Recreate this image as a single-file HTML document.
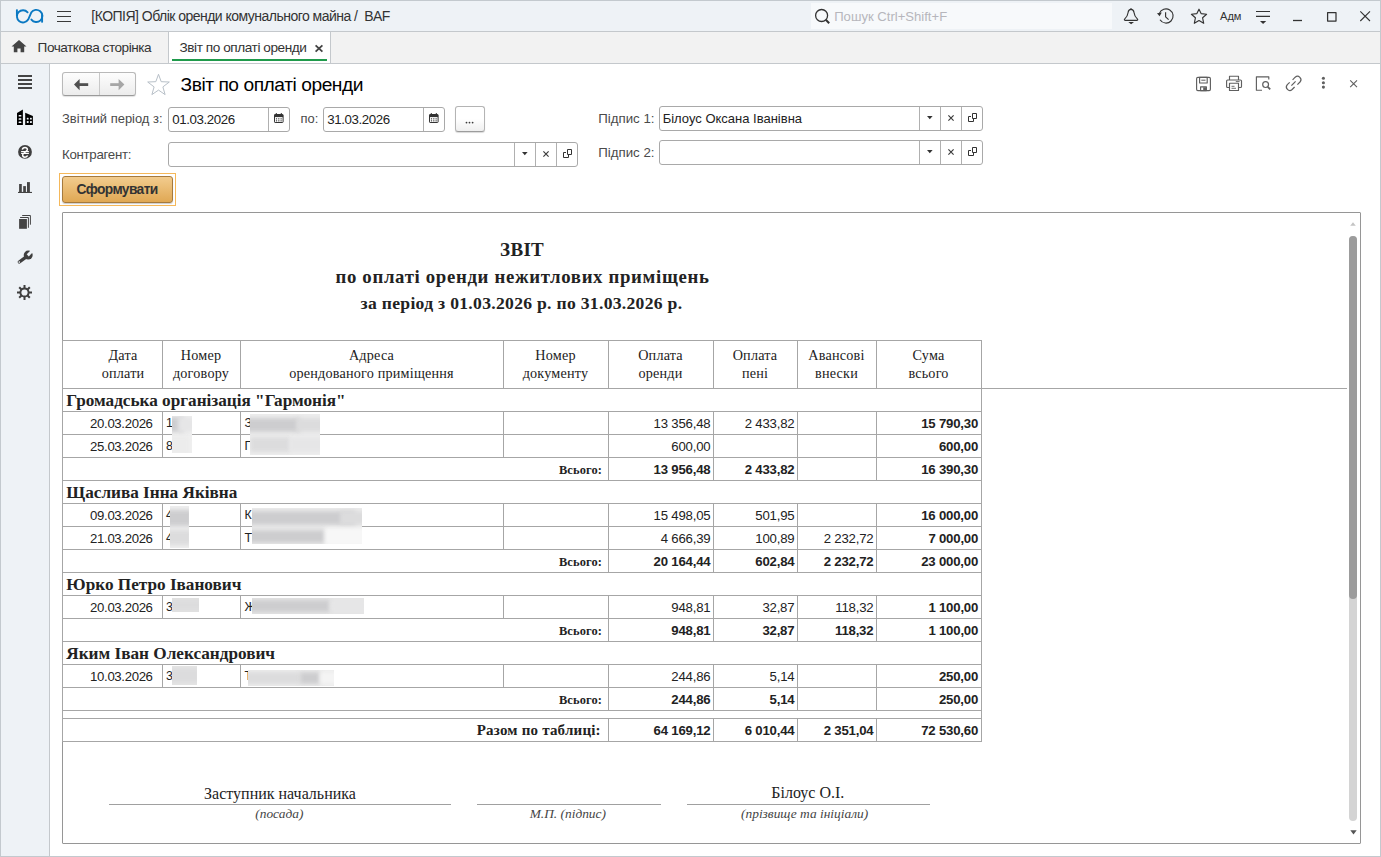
<!DOCTYPE html>
<html><head><meta charset="utf-8"><title>Звіт по оплаті оренди</title>
<style>
html,body{margin:0;padding:0;}
body{width:1381px;height:857px;overflow:hidden;position:relative;background:#fff;font-family:"Liberation Sans",sans-serif;}
.t{position:absolute;white-space:nowrap;line-height:1;}
.l{position:absolute;box-sizing:border-box;}
svg{position:absolute;overflow:visible;}
</style></head><body>

<div class="l" style="left:0px;top:0px;width:1381px;height:32px;background:#eef2f6;"></div>
<div class="l" style="left:0px;top:32px;width:1381px;height:32px;background:#f2f2f2;"></div>
<div class="l" style="left:0px;top:64px;width:50px;height:793px;background:#eef2f6;"></div>
<div class="l" style="left:0px;top:0px;width:1381px;height:1px;background:#c3c9ce"></div>
<div class="l" style="left:0px;top:0px;width:1px;height:857px;background:#c3c9ce"></div>
<div class="l" style="left:1380px;top:0px;width:1px;height:857px;background:#c3c9ce"></div>
<div class="l" style="left:0px;top:856px;width:1381px;height:1px;background:#c3c9ce"></div>
<div class="l" style="left:1px;top:31px;width:1379px;height:1px;background:#c4c8cc"></div>
<div class="l" style="left:1px;top:63px;width:1379px;height:1px;background:#c4c8cc"></div>
<div class="l" style="left:49px;top:64px;width:1px;height:792px;background:#c4c8cc"></div>
<svg style="left:0px;top:0px" width="50" height="32" viewBox="0 0 50 32">
<g fill="none" stroke="#0a78c2" stroke-width="1.9" stroke-linecap="round">
<path d="M27.6 12.3 A6.1 6.1 0 1 0 28.2 19.6 L31.2 12.6 A6.1 6.1 0 1 1 31.4 19.6"/>
<path d="M16.9 9.4 L16.9 16" stroke-linecap="butt"/>
<path d="M42.1 14.5 L42.1 22.6" stroke-linecap="butt"/>
</g>
</svg>
<div class="l" style="left:57px;top:10.5px;width:14px;height:1.5px;background:#3a3a3a;"></div>
<div class="l" style="left:57px;top:15.5px;width:14px;height:1.5px;background:#3a3a3a;"></div>
<div class="l" style="left:57px;top:20.5px;width:14px;height:1.5px;background:#3a3a3a;"></div>
<div class="t" style="left:91.3px;top:9.35px;font-size:14.0px;font-family:'Liberation Sans', sans-serif;font-weight:400;color:#333;font-style:normal;letter-spacing:-0.52px;">[КОПІЯ] Облік оренди комунального майна /&nbsp; BAF</div>
<div class="l" style="left:811px;top:3px;width:301px;height:26px;background:#f7f9fb;"></div>
<svg style="left:814px;top:8px" width="17" height="17" viewBox="0 0 17 17">
<circle cx="7.6" cy="7.5" r="6" fill="none" stroke="#333" stroke-width="1.3"/>
<path d="M11.8 11.8 L15.2 15.2" stroke="#333" stroke-width="2"/>
</svg>
<div class="t" style="left:834.2px;top:9.91px;font-size:13.1px;font-family:'Liberation Sans', sans-serif;font-weight:400;color:#b6b6bc;font-style:normal;">Пошук Ctrl+Shift+F</div>
<svg style="left:0px;top:0px" width="1381" height="32" viewBox="0 0 1381 32">
<g fill="none" stroke="#333" stroke-width="1.15" stroke-linejoin="round">
<path d="M1131 9.4 C1129 9.4 1128.3 10.6 1128.1 12.5 C1127.8 15.6 1127.5 16.5 1124.6 19.2 C1124.2 19.7 1124.3 20.3 1125 20.3 L1137.1 20.3 C1137.8 20.3 1137.9 19.7 1137.5 19.2 C1134.6 16.5 1134.3 15.6 1134 12.5 C1133.8 10.6 1133.1 9.4 1131 9.4 Z"/>
<path d="M1160 19.8 A7.1 7.1 0 1 0 1159.3 13.6"/>
<path d="M1165.6 12.3 L1165.6 16.8 L1168.6 19.6"/>
<path d="M1199 9.2 L1201.1 13.6 L1206.6 14.3 L1202.6 17.8 L1203.7 23.3 L1199 20.6 L1194.3 23.3 L1195.4 17.8 L1191.4 14.3 L1196.9 13.6 Z"/>
<path d="M1256 11.5 H1270 M1256 16.4 H1270"/>
<path d="M1293 20.5 H1302" stroke-width="1.3"/>
<rect x="1327.6" y="12.6" width="8.4" height="8.4" stroke-width="1.25"/>
<path d="M1360.3 11.3 L1370 21 M1370 11.3 L1360.3 21" stroke-width="1.1"/>
</g>
<g fill="#333">
<circle cx="1131" cy="9.2" r="0.9"/>
<path d="M1128.3 22.1 L1134 22.1 L1131.1 24.2 Z"/>
<path d="M1157 13.2 L1161.8 12.6 L1159.6 16.3 Z"/>
<path d="M1260 21 L1266.2 21 L1263.1 24 Z"/>
</g>
</svg>
<div class="t" style="left:1220px;top:10.60px;font-size:11.1px;font-family:'Liberation Sans', sans-serif;font-weight:400;color:#333;font-style:normal;">Адм</div>
<svg style="left:10.6px;top:40px" width="16" height="13" viewBox="0 0 16 13">
<path d="M8 0 L15.5 6.6 L13.2 6.6 L13.2 12.2 L9.6 12.2 L9.6 8.6 L6.4 8.6 L6.4 12.2 L2.8 12.2 L2.8 6.6 L0.5 6.6 Z" fill="#444"/>
</svg>
<div class="t" style="left:37.6px;top:40.69px;font-size:13.6px;font-family:'Liberation Sans', sans-serif;font-weight:400;color:#333;font-style:normal;letter-spacing:-0.47px;">Початкова сторінка</div>
<div class="l" style="left:169px;top:32px;width:161px;height:31px;background:#fff;"></div>
<div class="l" style="left:168px;top:32px;width:1px;height:31px;background:#c4c8cc"></div>
<div class="l" style="left:330px;top:32px;width:1px;height:31px;background:#c4c8cc"></div>
<div class="l" style="left:172px;top:59px;width:155px;height:2px;background:#1f9a4b;"></div>
<div class="t" style="left:179.5px;top:40.69px;font-size:13.6px;font-family:'Liberation Sans', sans-serif;font-weight:400;color:#333;font-style:normal;letter-spacing:-0.43px;">Звіт по оплаті оренди</div>
<svg style="left:314.5px;top:44.5px" width="8" height="7" viewBox="0 0 8 7">
<path d="M0.6 0.3 L7.4 6.7 M7.4 0.3 L0.6 6.7" stroke="#444" stroke-width="1.8"/>
</svg>
<div class="l" style="left:18px;top:75.2px;width:14px;height:1.7999999999999972px;background:#444;"></div>
<div class="l" style="left:18px;top:79.2px;width:14px;height:1.7999999999999972px;background:#444;"></div>
<div class="l" style="left:18px;top:83.2px;width:14px;height:1.7999999999999972px;background:#444;"></div>
<div class="l" style="left:18px;top:87.2px;width:14px;height:1.7999999999999972px;background:#444;"></div>
<svg style="left:16px;top:109px" width="18" height="17" viewBox="0 0 18 17">
<path d="M1 4 L6.9 0.4 L6.9 16 L1 16 Z" fill="#000"/>
<path d="M9.2 3.7 L16.9 7.1 L16.9 16 L9.2 16 Z" fill="#000"/>
<rect x="2.6" y="6" width="2.8" height="1.5" rx="0.5" fill="#eef2f6"/>
<rect x="2.6" y="9.3" width="2.8" height="1.5" rx="0.5" fill="#eef2f6"/>
<rect x="2.6" y="12.6" width="2.8" height="1.5" rx="0.5" fill="#eef2f6"/>
<rect x="10.8" y="8.8" width="1.8" height="1.8" rx="0.5" fill="#eef2f6"/>
<rect x="14" y="8.8" width="1.8" height="1.8" rx="0.5" fill="#eef2f6"/>
<rect x="10.8" y="12.1" width="1.8" height="1.8" rx="0.5" fill="#eef2f6"/>
<rect x="14" y="12.1" width="1.8" height="1.8" rx="0.5" fill="#eef2f6"/>
</svg>
<svg style="left:18px;top:145px" width="14" height="14" viewBox="0 0 14 14">
<circle cx="7" cy="6.9" r="6.9" fill="#3f3f3f"/>
<path d="M4.3 4.6 C4.6 3 6 2.5 7 2.5 C8.4 2.5 9.5 3.4 9.4 4.6 C9.3 6.4 4.6 8.2 4.6 10 C4.6 11.5 5.8 12.2 7 12.2 C8.2 12.2 9.2 11.6 9.6 10.6" fill="none" stroke="#fff" stroke-width="1.45"/>
<path d="M3.1 6.6 H10.9 M3.1 8.5 H10.9" stroke="#fff" stroke-width="1.1"/>
</svg>
<svg style="left:18px;top:182px" width="15" height="12" viewBox="0 0 15 12">
<rect x="1.1" y="2" width="2.7" height="8.8" fill="#444"/>
<rect x="5.2" y="4.1" width="2.7" height="6.7" fill="#444"/>
<rect x="9" y="0.1" width="2.9" height="10.7" fill="#444"/>
<rect x="0" y="9.9" width="14" height="1.1" fill="#444"/>
</svg>
<svg style="left:18px;top:214px" width="14" height="16" viewBox="0 0 14 16">
<rect x="1.1" y="5" width="7.8" height="9.8" fill="#444"/>
<path d="M2.1 3.5 H10.4 V13.8" fill="none" stroke="#444" stroke-width="1"/>
<path d="M4.2 1.5 H12.4 V10.7" fill="none" stroke="#444" stroke-width="1"/>
</svg>
<svg style="left:16px;top:248px" width="17" height="17" viewBox="0 0 17 17">
<path d="M3.3 14 L10.6 8.6" stroke="#3f3f3f" stroke-width="3.3" stroke-linecap="round"/>
<circle cx="12.2" cy="7.1" r="4.5" fill="#3f3f3f"/>
<rect x="12.6" y="1.8" width="2.9" height="6.5" fill="#eef2f6" transform="rotate(45 14 5.05)"/>
<circle cx="3.3" cy="14" r="0.85" fill="#eef2f6"/>
</svg>
<svg style="left:17.2px;top:285px" width="15" height="15" viewBox="0 0 15 15">
<g fill="#3f3f3f">
<rect x="6.5" y="0" width="2" height="15"/>
<rect x="6.5" y="0" width="2" height="15" transform="rotate(45 7.5 7.5)"/>
<rect x="6.5" y="0" width="2" height="15" transform="rotate(90 7.5 7.5)"/>
<rect x="6.5" y="0" width="2" height="15" transform="rotate(135 7.5 7.5)"/>
<circle cx="7.5" cy="7.5" r="5.1"/>
</g>
<circle cx="7.5" cy="7.5" r="3.1" fill="#eef2f6"/>
</svg>
<div class="l" style="left:62px;top:72px;width:74px;height:24px;border:1px solid #b9b9b9;border-bottom-color:#9a9a9a;border-radius:3px;background:linear-gradient(#fdfdfd,#ececec);box-shadow:0 1px 1px rgba(0,0,0,0.12);"></div>
<div class="l" style="left:99px;top:73px;width:1px;height:22px;background:#c8c8c8"></div>
<svg style="left:0px;top:0px" width="200" height="100" viewBox="0 0 200 100">
<path d="M79 84.6 H88.2" stroke="#505050" stroke-width="2.8"/>
<path d="M74 84.6 L79.6 78.9 L79.6 90.3 Z" fill="#505050"/>
<path d="M110.2 84.6 H119" stroke="#a6a6a6" stroke-width="2.8"/>
<path d="M124.4 84.6 L118.6 78.9 L118.6 90.3 Z" fill="#a6a6a6"/>
<path d="M158.5 74.3 L161.2 81.7 L169.3 82 L162.9 86.9 L165.1 94.6 L158.5 90.1 L151.9 94.6 L154.1 86.9 L147.7 82 L155.8 81.7 Z" fill="none" stroke="#b3bcc4" stroke-width="0.95" stroke-linejoin="miter"/>
</svg>
<div class="t" style="left:180.5px;top:74.75px;font-size:19.2px;font-family:'Liberation Sans', sans-serif;font-weight:400;color:#000;font-style:normal;letter-spacing:-0.45px;">Звіт по оплаті оренди</div>
<svg style="left:0px;top:0px" width="1381" height="100" viewBox="0 0 1381 100">
<g fill="none" stroke="#5f5f5f" stroke-width="1.15" stroke-linejoin="round">
<rect x="1196.6" y="77.4" width="13.8" height="13.2" rx="1.3"/>
<rect x="1199.6" y="77.4" width="7.6" height="5.6"/>
<path d="M1201.3 80.2 H1205.5" stroke-width="1"/>
<rect x="1200.6" y="86.8" width="5.8" height="3.8"/>
<path d="M1229.5 80 V76.2 H1238.5 V80"/>
<path d="M1229.5 87.5 H1227.6 C1226.9 87.5 1226.6 87.2 1226.6 86.5 V81 C1226.6 80.3 1226.9 80 1227.6 80 H1240.5 C1241.2 80 1241.5 80.3 1241.5 81 V86.5 C1241.5 87.2 1241.2 87.5 1240.5 87.5 H1238.5"/>
<rect x="1229.5" y="83.2" width="9" height="7.3"/>
<path d="M1231.5 86.3 H1234.5 M1231.5 88.3 H1236" stroke-width="0.9"/>
<path d="M1235.8 81.6 H1239.6" stroke-width="0.9"/>
<path d="M1262 90.2 H1256.4 V76.8 H1268.8 V79.5"/>
<circle cx="1265.6" cy="84.6" r="2.9" stroke-width="1.2"/>
<path d="M1267.8 86.8 L1270.2 89.4" stroke-width="1.7"/>
<path d="M1292.6 79.8 L1295.2 77.2 A3.4 3.4 0 0 1 1300 82 L1297.4 84.6" stroke-width="1.2"/>
<path d="M1289.7 82.3 L1287.3 84.7 A3.4 3.4 0 0 0 1292.1 89.5 L1294.6 87" stroke-width="1.2"/>
<path d="M1291.4 85.6 L1295.6 81.3" stroke-width="1.2"/>
<path d="M1350.2 80.3 L1357 87.1 M1357 80.3 L1350.2 87.1" stroke-width="1.1"/>
</g>
<g fill="#5f5f5f">
<rect x="1203.2" y="87.3" width="2.8" height="3"/>
<circle cx="1323.4" cy="78.3" r="1.55"/>
<circle cx="1323.4" cy="82.7" r="1.55"/>
<circle cx="1323.4" cy="87.1" r="1.55"/>
</g>
</svg>
<div class="t" style="left:62px;top:113.04px;font-size:12.95px;font-family:'Liberation Sans', sans-serif;font-weight:400;color:#4a4a4a;font-style:normal;">Звітний період з:</div>
<div class="l" style="left:168px;top:107px;width:122px;height:25px;border:1px solid #a9a9a9;border-radius:3px;background:#fff;"></div>
<div class="l" style="left:268px;top:108px;width:1px;height:23px;background:#b0b0b0"></div>
<div class="t" style="left:172.3px;top:112.74px;font-size:13.3px;font-family:'Liberation Sans', sans-serif;font-weight:400;color:#222;font-style:normal;letter-spacing:-0.4px;">01.03.2026</div>
<div class="t" style="left:300.5px;top:113.04px;font-size:12.95px;font-family:'Liberation Sans', sans-serif;font-weight:400;color:#4a4a4a;font-style:normal;">по:</div>
<div class="l" style="left:323px;top:107px;width:122px;height:25px;border:1px solid #a9a9a9;border-radius:3px;background:#fff;"></div>
<div class="l" style="left:423px;top:108px;width:1px;height:23px;background:#b0b0b0"></div>
<div class="t" style="left:327.2px;top:112.74px;font-size:13.3px;font-family:'Liberation Sans', sans-serif;font-weight:400;color:#222;font-style:normal;letter-spacing:-0.4px;">31.03.2026</div>
<svg style="left:274px;top:113px" width="10" height="10" viewBox="0 0 10 10">
<rect x="0.5" y="1.5" width="8.6" height="8" rx="0.6" fill="none" stroke="#333" stroke-width="1"/>
<rect x="0.5" y="1.5" width="8.6" height="2.6" fill="#333"/>
<path d="M2.3 0 V2 M7.3 0 V2" stroke="#333" stroke-width="1"/>
<g fill="#333"><rect x="1.9" y="5.3" width="1.2" height="1.1"/><rect x="4.2" y="5.3" width="1.2" height="1.1"/><rect x="6.5" y="5.3" width="1.2" height="1.1"/>
<rect x="1.9" y="7.3" width="1.2" height="1.1"/><rect x="4.2" y="7.3" width="1.2" height="1.1"/><rect x="6.5" y="7.3" width="1.2" height="1.1"/></g>
</svg>
<svg style="left:429px;top:113px" width="10" height="10" viewBox="0 0 10 10">
<rect x="0.5" y="1.5" width="8.6" height="8" rx="0.6" fill="none" stroke="#333" stroke-width="1"/>
<rect x="0.5" y="1.5" width="8.6" height="2.6" fill="#333"/>
<path d="M2.3 0 V2 M7.3 0 V2" stroke="#333" stroke-width="1"/>
<g fill="#333"><rect x="1.9" y="5.3" width="1.2" height="1.1"/><rect x="4.2" y="5.3" width="1.2" height="1.1"/><rect x="6.5" y="5.3" width="1.2" height="1.1"/>
<rect x="1.9" y="7.3" width="1.2" height="1.1"/><rect x="4.2" y="7.3" width="1.2" height="1.1"/><rect x="6.5" y="7.3" width="1.2" height="1.1"/></g>
</svg>
<div class="l" style="left:455px;top:106px;width:30px;height:26px;border:1px solid #b4b4b4;border-bottom-color:#9c9c9c;border-radius:3px;background:linear-gradient(#fff 0%,#fff 50%,#efefef 100%);box-shadow:0 1px 1px rgba(0,0,0,0.15);"></div>
<svg style="left:464px;top:120px" width="12" height="5" viewBox="0 0 12 5"><g fill="#3a3a3a"><circle cx="2.5" cy="2.6" r="0.9"/><circle cx="5.5" cy="2.6" r="0.9"/><circle cx="8.6" cy="2.6" r="0.9"/></g></svg>
<div class="t" style="left:62.0px;top:147.74px;font-size:13.3px;font-family:'Liberation Sans', sans-serif;font-weight:400;color:#4a4a4a;font-style:normal;letter-spacing:-0.3px;">Контрагент:</div>
<div class="l" style="left:168px;top:142px;width:410px;height:25px;border:1px solid #a9a9a9;border-radius:3px;background:#fff;"></div>
<div class="l" style="left:514px;top:143px;width:1px;height:23px;background:#b0b0b0"></div>
<div class="l" style="left:535px;top:143px;width:1px;height:23px;background:#b0b0b0"></div>
<div class="l" style="left:556px;top:143px;width:1px;height:23px;background:#b0b0b0"></div>
<svg style="left:522px;top:152px" width="6" height="4" viewBox="0 0 6 4"><path d="M0 0 H5.6 L2.8 3.3 Z" fill="#333"/></svg>
<svg style="left:543px;top:151px" width="6" height="6" viewBox="0 0 6 6"><path d="M0.4 0.4 L5.6 5.6 M5.6 0.4 L0.4 5.6" stroke="#3a3a3a" stroke-width="1.15"/></svg>
<svg style="left:563px;top:149px" width="10" height="10" viewBox="0 0 10 10">
<path d="M4.5 0.5 H8.5 V5.5 H4.5 Z" fill="none" stroke="#333" stroke-width="1"/>
<path d="M3 3.5 H0.5 V8.5 H5.5 V6" fill="none" stroke="#333" stroke-width="1"/>
</svg>
<div class="t" style="left:598.2px;top:111.54px;font-size:13.3px;font-family:'Liberation Sans', sans-serif;font-weight:400;color:#4a4a4a;font-style:normal;">Підпис 1:</div>
<div class="l" style="left:659px;top:106px;width:324px;height:25px;border:1px solid #a9a9a9;border-radius:3px;background:#fff;"></div>
<div class="l" style="left:919px;top:107px;width:1px;height:23px;background:#b0b0b0"></div>
<div class="l" style="left:940px;top:107px;width:1px;height:23px;background:#b0b0b0"></div>
<div class="l" style="left:961px;top:107px;width:1px;height:23px;background:#b0b0b0"></div>
<div class="t" style="left:662.7px;top:112.00px;font-size:13px;font-family:'Liberation Sans', sans-serif;font-weight:400;color:#222;font-style:normal;">Білоус Оксана Іванівна</div>
<svg style="left:927px;top:116px" width="6" height="4" viewBox="0 0 6 4"><path d="M0 0 H5.6 L2.8 3.3 Z" fill="#333"/></svg>
<svg style="left:948px;top:115px" width="6" height="6" viewBox="0 0 6 6"><path d="M0.4 0.4 L5.6 5.6 M5.6 0.4 L0.4 5.6" stroke="#3a3a3a" stroke-width="1.15"/></svg>
<svg style="left:968px;top:113px" width="10" height="10" viewBox="0 0 10 10">
<path d="M4.5 0.5 H8.5 V5.5 H4.5 Z" fill="none" stroke="#333" stroke-width="1"/>
<path d="M3 3.5 H0.5 V8.5 H5.5 V6" fill="none" stroke="#333" stroke-width="1"/>
</svg>
<div class="t" style="left:598.2px;top:145.94px;font-size:13.3px;font-family:'Liberation Sans', sans-serif;font-weight:400;color:#4a4a4a;font-style:normal;">Підпис 2:</div>
<div class="l" style="left:659px;top:140px;width:324px;height:25px;border:1px solid #a9a9a9;border-radius:3px;background:#fff;"></div>
<div class="l" style="left:919px;top:141px;width:1px;height:23px;background:#b0b0b0"></div>
<div class="l" style="left:940px;top:141px;width:1px;height:23px;background:#b0b0b0"></div>
<div class="l" style="left:961px;top:141px;width:1px;height:23px;background:#b0b0b0"></div>
<svg style="left:927px;top:150px" width="6" height="4" viewBox="0 0 6 4"><path d="M0 0 H5.6 L2.8 3.3 Z" fill="#333"/></svg>
<svg style="left:948px;top:149px" width="6" height="6" viewBox="0 0 6 6"><path d="M0.4 0.4 L5.6 5.6 M5.6 0.4 L0.4 5.6" stroke="#3a3a3a" stroke-width="1.15"/></svg>
<svg style="left:968px;top:147px" width="10" height="10" viewBox="0 0 10 10">
<path d="M4.5 0.5 H8.5 V5.5 H4.5 Z" fill="none" stroke="#333" stroke-width="1"/>
<path d="M3 3.5 H0.5 V8.5 H5.5 V6" fill="none" stroke="#333" stroke-width="1"/>
</svg>
<div class="l" style="left:59px;top:173px;width:117px;height:33px;border:1px solid #f5b85a;"></div>
<div class="l" style="left:62px;top:176px;width:111px;height:27px;border:1px solid #a57a3e;border-radius:3px;background:linear-gradient(#f2cc8e,#e0a854);box-shadow:0 1px 1px rgba(0,0,0,0.2);"></div>
<div class="t" style="left:76.6px;top:182.92px;font-size:13.8px;font-family:'Liberation Sans', sans-serif;font-weight:700;color:#333;font-style:normal;letter-spacing:-0.62px;">Сформувати</div>
<div class="l" style="left:62px;top:212px;width:1299px;height:632px;border:1px solid #969696;border-radius:1px;background:#fff;"></div>
<svg style="left:1350px;top:222px" width="7" height="5" viewBox="0 0 7 5"><path d="M0.2 3.7 L3 0.2 L5.8 3.7 Z" fill="#c4c4c4"/></svg>
<div class="l" style="left:1349px;top:236px;width:8px;height:585px;background:#d4d4d4;border-radius:4px;"></div>
<div class="l" style="left:1349px;top:236px;width:8px;height:363px;background:#9c9c9c;border-radius:4px;"></div>
<svg style="left:1350px;top:830px" width="7" height="5" viewBox="0 0 7 5"><path d="M0.3 0.3 L6.7 0.3 L3.5 4.5 Z" fill="#555"/></svg>
<div class="t" style="left:222.10000000000002px;width:600px;text-align:center;top:239.89px;font-size:19.0px;font-family:'Liberation Serif', serif;font-weight:700;color:#222;font-style:normal;letter-spacing:0.3px;">ЗВІТ</div>
<div class="t" style="left:222.5px;width:600px;text-align:center;top:268.25px;font-size:18.8px;font-family:'Liberation Serif', serif;font-weight:700;color:#222;font-style:normal;letter-spacing:0.66px;">по оплаті оренди нежитлових приміщень</div>
<div class="t" style="left:221.5px;width:600px;text-align:center;top:294.86px;font-size:17.6px;font-family:'Liberation Serif', serif;font-weight:700;color:#222;font-style:normal;letter-spacing:0.3px;">за період з 01.03.2026 р. по 31.03.2026 р.</div>
<div class="l" style="left:62px;top:340px;width:920px;height:1px;background:#a6a6a6"></div>
<div class="l" style="left:62px;top:388px;width:1285px;height:1px;background:#a6a6a6"></div>
<div class="l" style="left:62px;top:340px;width:1px;height:49px;background:#a6a6a6"></div>
<div class="l" style="left:162px;top:340px;width:1px;height:49px;background:#a6a6a6"></div>
<div class="l" style="left:240px;top:340px;width:1px;height:49px;background:#a6a6a6"></div>
<div class="l" style="left:503px;top:340px;width:1px;height:49px;background:#a6a6a6"></div>
<div class="l" style="left:608px;top:340px;width:1px;height:49px;background:#a6a6a6"></div>
<div class="l" style="left:713px;top:340px;width:1px;height:49px;background:#a6a6a6"></div>
<div class="l" style="left:797px;top:340px;width:1px;height:49px;background:#a6a6a6"></div>
<div class="l" style="left:876px;top:340px;width:1px;height:49px;background:#a6a6a6"></div>
<div class="l" style="left:981px;top:340px;width:1px;height:49px;background:#a6a6a6"></div>
<div class="t" style="left:-177px;width:600px;text-align:center;top:348.11px;font-size:14.2px;font-family:'Liberation Serif', serif;font-weight:400;color:#222;font-style:normal;letter-spacing:0.2px;">Дата</div>
<div class="t" style="left:-177px;width:600px;text-align:center;top:366.11px;font-size:14.2px;font-family:'Liberation Serif', serif;font-weight:400;color:#222;font-style:normal;letter-spacing:0.2px;">оплати</div>
<div class="t" style="left:-99px;width:600px;text-align:center;top:348.11px;font-size:14.2px;font-family:'Liberation Serif', serif;font-weight:400;color:#222;font-style:normal;letter-spacing:0.2px;">Номер</div>
<div class="t" style="left:-99px;width:600px;text-align:center;top:366.11px;font-size:14.2px;font-family:'Liberation Serif', serif;font-weight:400;color:#222;font-style:normal;letter-spacing:0.2px;">договору</div>
<div class="t" style="left:71.5px;width:600px;text-align:center;top:348.11px;font-size:14.2px;font-family:'Liberation Serif', serif;font-weight:400;color:#222;font-style:normal;letter-spacing:0.2px;">Адреса</div>
<div class="t" style="left:71.5px;width:600px;text-align:center;top:366.11px;font-size:14.2px;font-family:'Liberation Serif', serif;font-weight:400;color:#222;font-style:normal;letter-spacing:0.2px;">орендованого приміщення</div>
<div class="t" style="left:255.5px;width:600px;text-align:center;top:348.11px;font-size:14.2px;font-family:'Liberation Serif', serif;font-weight:400;color:#222;font-style:normal;letter-spacing:0.2px;">Номер</div>
<div class="t" style="left:255.5px;width:600px;text-align:center;top:366.11px;font-size:14.2px;font-family:'Liberation Serif', serif;font-weight:400;color:#222;font-style:normal;letter-spacing:0.2px;">документу</div>
<div class="t" style="left:360.5px;width:600px;text-align:center;top:348.11px;font-size:14.2px;font-family:'Liberation Serif', serif;font-weight:400;color:#222;font-style:normal;letter-spacing:0.2px;">Оплата</div>
<div class="t" style="left:360.5px;width:600px;text-align:center;top:366.11px;font-size:14.2px;font-family:'Liberation Serif', serif;font-weight:400;color:#222;font-style:normal;letter-spacing:0.2px;">оренди</div>
<div class="t" style="left:455px;width:600px;text-align:center;top:348.11px;font-size:14.2px;font-family:'Liberation Serif', serif;font-weight:400;color:#222;font-style:normal;letter-spacing:0.2px;">Оплата</div>
<div class="t" style="left:455px;width:600px;text-align:center;top:366.11px;font-size:14.2px;font-family:'Liberation Serif', serif;font-weight:400;color:#222;font-style:normal;letter-spacing:0.2px;">пені</div>
<div class="t" style="left:536.5px;width:600px;text-align:center;top:348.11px;font-size:14.2px;font-family:'Liberation Serif', serif;font-weight:400;color:#222;font-style:normal;letter-spacing:0.2px;">Авансові</div>
<div class="t" style="left:536.5px;width:600px;text-align:center;top:366.11px;font-size:14.2px;font-family:'Liberation Serif', serif;font-weight:400;color:#222;font-style:normal;letter-spacing:0.2px;">внески</div>
<div class="t" style="left:628.5px;width:600px;text-align:center;top:348.11px;font-size:14.2px;font-family:'Liberation Serif', serif;font-weight:400;color:#222;font-style:normal;letter-spacing:0.2px;">Сума</div>
<div class="t" style="left:628.5px;width:600px;text-align:center;top:366.11px;font-size:14.2px;font-family:'Liberation Serif', serif;font-weight:400;color:#222;font-style:normal;letter-spacing:0.2px;">всього</div>
<div class="l" style="left:62px;top:411px;width:920px;height:1px;background:#a6a6a6"></div>
<div class="l" style="left:62px;top:388px;width:1px;height:24px;background:#a6a6a6"></div>
<div class="l" style="left:981px;top:388px;width:1px;height:24px;background:#a6a6a6"></div>
<div class="t" style="left:66.3px;top:391.60px;font-size:17.2px;font-family:'Liberation Serif', serif;font-weight:700;color:#222;font-style:normal;">Громадська організація "Гармонія"</div>
<div class="l" style="left:62px;top:434px;width:920px;height:1px;background:#a6a6a6"></div>
<div class="l" style="left:62px;top:411px;width:1px;height:24px;background:#a6a6a6"></div>
<div class="l" style="left:981px;top:411px;width:1px;height:24px;background:#a6a6a6"></div>
<div class="l" style="left:162px;top:411px;width:1px;height:24px;background:#a6a6a6"></div>
<div class="l" style="left:240px;top:411px;width:1px;height:24px;background:#a6a6a6"></div>
<div class="l" style="left:503px;top:411px;width:1px;height:24px;background:#a6a6a6"></div>
<div class="l" style="left:608px;top:411px;width:1px;height:24px;background:#a6a6a6"></div>
<div class="l" style="left:713px;top:411px;width:1px;height:24px;background:#a6a6a6"></div>
<div class="l" style="left:797px;top:411px;width:1px;height:24px;background:#a6a6a6"></div>
<div class="l" style="left:876px;top:411px;width:1px;height:24px;background:#a6a6a6"></div>
<div class="t" style="right:1228.4px;top:416.63px;font-size:13.2px;font-family:'Liberation Sans', sans-serif;font-weight:400;color:#222;font-style:normal;letter-spacing:-0.35px;">20.03.2026</div>
<div class="t" style="left:166px;top:417.10px;font-size:12.4px;font-family:'Liberation Sans', sans-serif;font-weight:400;color:#222;font-style:normal;">1</div>
<div class="t" style="left:244.5px;top:417.10px;font-size:12.4px;font-family:'Liberation Sans', sans-serif;font-weight:400;color:#222;font-style:normal;">З</div>
<div class="t" style="right:670.6px;top:416.73px;font-size:13.2px;font-family:'Liberation Sans', sans-serif;font-weight:400;color:#222;font-style:normal;letter-spacing:-0.2px;">13 356,48</div>
<div class="t" style="right:586.6px;top:416.73px;font-size:13.2px;font-family:'Liberation Sans', sans-serif;font-weight:400;color:#222;font-style:normal;letter-spacing:-0.2px;">2 433,82</div>
<div class="t" style="right:402.9px;top:416.73px;font-size:13.2px;font-family:'Liberation Sans', sans-serif;font-weight:700;color:#222;font-style:normal;letter-spacing:-0.2px;">15 790,30</div>
<div class="l" style="left:62px;top:457px;width:920px;height:1px;background:#a6a6a6"></div>
<div class="l" style="left:62px;top:434px;width:1px;height:24px;background:#a6a6a6"></div>
<div class="l" style="left:981px;top:434px;width:1px;height:24px;background:#a6a6a6"></div>
<div class="l" style="left:162px;top:434px;width:1px;height:24px;background:#a6a6a6"></div>
<div class="l" style="left:240px;top:434px;width:1px;height:24px;background:#a6a6a6"></div>
<div class="l" style="left:503px;top:434px;width:1px;height:24px;background:#a6a6a6"></div>
<div class="l" style="left:608px;top:434px;width:1px;height:24px;background:#a6a6a6"></div>
<div class="l" style="left:713px;top:434px;width:1px;height:24px;background:#a6a6a6"></div>
<div class="l" style="left:797px;top:434px;width:1px;height:24px;background:#a6a6a6"></div>
<div class="l" style="left:876px;top:434px;width:1px;height:24px;background:#a6a6a6"></div>
<div class="t" style="right:1228.4px;top:439.63px;font-size:13.2px;font-family:'Liberation Sans', sans-serif;font-weight:400;color:#222;font-style:normal;letter-spacing:-0.35px;">25.03.2026</div>
<div class="t" style="left:166px;top:440.10px;font-size:12.4px;font-family:'Liberation Sans', sans-serif;font-weight:400;color:#222;font-style:normal;">8</div>
<div class="t" style="left:244.5px;top:440.10px;font-size:12.4px;font-family:'Liberation Sans', sans-serif;font-weight:400;color:#222;font-style:normal;">Г</div>
<div class="t" style="right:670.6px;top:439.73px;font-size:13.2px;font-family:'Liberation Sans', sans-serif;font-weight:400;color:#222;font-style:normal;letter-spacing:-0.2px;">600,00</div>
<div class="t" style="right:402.9px;top:439.73px;font-size:13.2px;font-family:'Liberation Sans', sans-serif;font-weight:700;color:#222;font-style:normal;letter-spacing:-0.2px;">600,00</div>
<div class="l" style="left:62px;top:480px;width:920px;height:1px;background:#a6a6a6"></div>
<div class="l" style="left:62px;top:457px;width:1px;height:24px;background:#a6a6a6"></div>
<div class="l" style="left:981px;top:457px;width:1px;height:24px;background:#a6a6a6"></div>
<div class="l" style="left:608px;top:457px;width:1px;height:24px;background:#a6a6a6"></div>
<div class="l" style="left:713px;top:457px;width:1px;height:24px;background:#a6a6a6"></div>
<div class="l" style="left:797px;top:457px;width:1px;height:24px;background:#a6a6a6"></div>
<div class="l" style="left:876px;top:457px;width:1px;height:24px;background:#a6a6a6"></div>
<div class="t" style="right:778.9px;top:464.22px;font-size:12.4px;font-family:'Liberation Serif', serif;font-weight:700;color:#222;font-style:normal;letter-spacing:0.15px;">Всього:</div>
<div class="t" style="right:670.6px;top:462.73px;font-size:13.2px;font-family:'Liberation Sans', sans-serif;font-weight:700;color:#222;font-style:normal;letter-spacing:-0.2px;">13 956,48</div>
<div class="t" style="right:586.6px;top:462.73px;font-size:13.2px;font-family:'Liberation Sans', sans-serif;font-weight:700;color:#222;font-style:normal;letter-spacing:-0.2px;">2 433,82</div>
<div class="t" style="right:402.9px;top:462.73px;font-size:13.2px;font-family:'Liberation Sans', sans-serif;font-weight:700;color:#222;font-style:normal;letter-spacing:-0.2px;">16 390,30</div>
<div class="l" style="left:62px;top:503px;width:920px;height:1px;background:#a6a6a6"></div>
<div class="l" style="left:62px;top:480px;width:1px;height:24px;background:#a6a6a6"></div>
<div class="l" style="left:981px;top:480px;width:1px;height:24px;background:#a6a6a6"></div>
<div class="t" style="left:66.3px;top:483.60px;font-size:17.2px;font-family:'Liberation Serif', serif;font-weight:700;color:#222;font-style:normal;">Щаслива Інна Яківна</div>
<div class="l" style="left:62px;top:526px;width:920px;height:1px;background:#a6a6a6"></div>
<div class="l" style="left:62px;top:503px;width:1px;height:24px;background:#a6a6a6"></div>
<div class="l" style="left:981px;top:503px;width:1px;height:24px;background:#a6a6a6"></div>
<div class="l" style="left:162px;top:503px;width:1px;height:24px;background:#a6a6a6"></div>
<div class="l" style="left:240px;top:503px;width:1px;height:24px;background:#a6a6a6"></div>
<div class="l" style="left:503px;top:503px;width:1px;height:24px;background:#a6a6a6"></div>
<div class="l" style="left:608px;top:503px;width:1px;height:24px;background:#a6a6a6"></div>
<div class="l" style="left:713px;top:503px;width:1px;height:24px;background:#a6a6a6"></div>
<div class="l" style="left:797px;top:503px;width:1px;height:24px;background:#a6a6a6"></div>
<div class="l" style="left:876px;top:503px;width:1px;height:24px;background:#a6a6a6"></div>
<div class="t" style="right:1228.4px;top:508.63px;font-size:13.2px;font-family:'Liberation Sans', sans-serif;font-weight:400;color:#222;font-style:normal;letter-spacing:-0.35px;">09.03.2026</div>
<div class="t" style="left:166px;top:509.10px;font-size:12.4px;font-family:'Liberation Sans', sans-serif;font-weight:400;color:#222;font-style:normal;">4</div>
<div class="t" style="left:244.5px;top:509.10px;font-size:12.4px;font-family:'Liberation Sans', sans-serif;font-weight:400;color:#222;font-style:normal;">К</div>
<div class="t" style="right:670.6px;top:508.73px;font-size:13.2px;font-family:'Liberation Sans', sans-serif;font-weight:400;color:#222;font-style:normal;letter-spacing:-0.2px;">15 498,05</div>
<div class="t" style="right:586.6px;top:508.73px;font-size:13.2px;font-family:'Liberation Sans', sans-serif;font-weight:400;color:#222;font-style:normal;letter-spacing:-0.2px;">501,95</div>
<div class="t" style="right:402.9px;top:508.73px;font-size:13.2px;font-family:'Liberation Sans', sans-serif;font-weight:700;color:#222;font-style:normal;letter-spacing:-0.2px;">16 000,00</div>
<div class="l" style="left:62px;top:549px;width:920px;height:1px;background:#a6a6a6"></div>
<div class="l" style="left:62px;top:526px;width:1px;height:24px;background:#a6a6a6"></div>
<div class="l" style="left:981px;top:526px;width:1px;height:24px;background:#a6a6a6"></div>
<div class="l" style="left:162px;top:526px;width:1px;height:24px;background:#a6a6a6"></div>
<div class="l" style="left:240px;top:526px;width:1px;height:24px;background:#a6a6a6"></div>
<div class="l" style="left:503px;top:526px;width:1px;height:24px;background:#a6a6a6"></div>
<div class="l" style="left:608px;top:526px;width:1px;height:24px;background:#a6a6a6"></div>
<div class="l" style="left:713px;top:526px;width:1px;height:24px;background:#a6a6a6"></div>
<div class="l" style="left:797px;top:526px;width:1px;height:24px;background:#a6a6a6"></div>
<div class="l" style="left:876px;top:526px;width:1px;height:24px;background:#a6a6a6"></div>
<div class="t" style="right:1228.4px;top:531.63px;font-size:13.2px;font-family:'Liberation Sans', sans-serif;font-weight:400;color:#222;font-style:normal;letter-spacing:-0.35px;">21.03.2026</div>
<div class="t" style="left:166px;top:532.10px;font-size:12.4px;font-family:'Liberation Sans', sans-serif;font-weight:400;color:#222;font-style:normal;">4</div>
<div class="t" style="left:244.5px;top:532.10px;font-size:12.4px;font-family:'Liberation Sans', sans-serif;font-weight:400;color:#222;font-style:normal;">Ті</div>
<div class="t" style="right:670.6px;top:531.73px;font-size:13.2px;font-family:'Liberation Sans', sans-serif;font-weight:400;color:#222;font-style:normal;letter-spacing:-0.2px;">4 666,39</div>
<div class="t" style="right:586.6px;top:531.73px;font-size:13.2px;font-family:'Liberation Sans', sans-serif;font-weight:400;color:#222;font-style:normal;letter-spacing:-0.2px;">100,89</div>
<div class="t" style="right:507.6px;top:531.73px;font-size:13.2px;font-family:'Liberation Sans', sans-serif;font-weight:400;color:#222;font-style:normal;letter-spacing:-0.2px;">2 232,72</div>
<div class="t" style="right:402.9px;top:531.73px;font-size:13.2px;font-family:'Liberation Sans', sans-serif;font-weight:700;color:#222;font-style:normal;letter-spacing:-0.2px;">7 000,00</div>
<div class="l" style="left:62px;top:572px;width:920px;height:1px;background:#a6a6a6"></div>
<div class="l" style="left:62px;top:549px;width:1px;height:24px;background:#a6a6a6"></div>
<div class="l" style="left:981px;top:549px;width:1px;height:24px;background:#a6a6a6"></div>
<div class="l" style="left:608px;top:549px;width:1px;height:24px;background:#a6a6a6"></div>
<div class="l" style="left:713px;top:549px;width:1px;height:24px;background:#a6a6a6"></div>
<div class="l" style="left:797px;top:549px;width:1px;height:24px;background:#a6a6a6"></div>
<div class="l" style="left:876px;top:549px;width:1px;height:24px;background:#a6a6a6"></div>
<div class="t" style="right:778.9px;top:556.22px;font-size:12.4px;font-family:'Liberation Serif', serif;font-weight:700;color:#222;font-style:normal;letter-spacing:0.15px;">Всього:</div>
<div class="t" style="right:670.6px;top:554.73px;font-size:13.2px;font-family:'Liberation Sans', sans-serif;font-weight:700;color:#222;font-style:normal;letter-spacing:-0.2px;">20 164,44</div>
<div class="t" style="right:586.6px;top:554.73px;font-size:13.2px;font-family:'Liberation Sans', sans-serif;font-weight:700;color:#222;font-style:normal;letter-spacing:-0.2px;">602,84</div>
<div class="t" style="right:507.6px;top:554.73px;font-size:13.2px;font-family:'Liberation Sans', sans-serif;font-weight:700;color:#222;font-style:normal;letter-spacing:-0.2px;">2 232,72</div>
<div class="t" style="right:402.9px;top:554.73px;font-size:13.2px;font-family:'Liberation Sans', sans-serif;font-weight:700;color:#222;font-style:normal;letter-spacing:-0.2px;">23 000,00</div>
<div class="l" style="left:62px;top:595px;width:920px;height:1px;background:#a6a6a6"></div>
<div class="l" style="left:62px;top:572px;width:1px;height:24px;background:#a6a6a6"></div>
<div class="l" style="left:981px;top:572px;width:1px;height:24px;background:#a6a6a6"></div>
<div class="t" style="left:66.3px;top:575.60px;font-size:17.2px;font-family:'Liberation Serif', serif;font-weight:700;color:#222;font-style:normal;">Юрко Петро Іванович</div>
<div class="l" style="left:62px;top:618px;width:920px;height:1px;background:#a6a6a6"></div>
<div class="l" style="left:62px;top:595px;width:1px;height:24px;background:#a6a6a6"></div>
<div class="l" style="left:981px;top:595px;width:1px;height:24px;background:#a6a6a6"></div>
<div class="l" style="left:162px;top:595px;width:1px;height:24px;background:#a6a6a6"></div>
<div class="l" style="left:240px;top:595px;width:1px;height:24px;background:#a6a6a6"></div>
<div class="l" style="left:503px;top:595px;width:1px;height:24px;background:#a6a6a6"></div>
<div class="l" style="left:608px;top:595px;width:1px;height:24px;background:#a6a6a6"></div>
<div class="l" style="left:713px;top:595px;width:1px;height:24px;background:#a6a6a6"></div>
<div class="l" style="left:797px;top:595px;width:1px;height:24px;background:#a6a6a6"></div>
<div class="l" style="left:876px;top:595px;width:1px;height:24px;background:#a6a6a6"></div>
<div class="t" style="right:1228.4px;top:600.63px;font-size:13.2px;font-family:'Liberation Sans', sans-serif;font-weight:400;color:#222;font-style:normal;letter-spacing:-0.35px;">20.03.2026</div>
<div class="t" style="left:166px;top:601.10px;font-size:12.4px;font-family:'Liberation Sans', sans-serif;font-weight:400;color:#222;font-style:normal;">3</div>
<div class="t" style="left:244.5px;top:601.10px;font-size:12.4px;font-family:'Liberation Sans', sans-serif;font-weight:400;color:#222;font-style:normal;">Ж</div>
<div class="t" style="right:670.6px;top:600.73px;font-size:13.2px;font-family:'Liberation Sans', sans-serif;font-weight:400;color:#222;font-style:normal;letter-spacing:-0.2px;">948,81</div>
<div class="t" style="right:586.6px;top:600.73px;font-size:13.2px;font-family:'Liberation Sans', sans-serif;font-weight:400;color:#222;font-style:normal;letter-spacing:-0.2px;">32,87</div>
<div class="t" style="right:507.6px;top:600.73px;font-size:13.2px;font-family:'Liberation Sans', sans-serif;font-weight:400;color:#222;font-style:normal;letter-spacing:-0.2px;">118,32</div>
<div class="t" style="right:402.9px;top:600.73px;font-size:13.2px;font-family:'Liberation Sans', sans-serif;font-weight:700;color:#222;font-style:normal;letter-spacing:-0.2px;">1 100,00</div>
<div class="l" style="left:62px;top:641px;width:920px;height:1px;background:#a6a6a6"></div>
<div class="l" style="left:62px;top:618px;width:1px;height:24px;background:#a6a6a6"></div>
<div class="l" style="left:981px;top:618px;width:1px;height:24px;background:#a6a6a6"></div>
<div class="l" style="left:608px;top:618px;width:1px;height:24px;background:#a6a6a6"></div>
<div class="l" style="left:713px;top:618px;width:1px;height:24px;background:#a6a6a6"></div>
<div class="l" style="left:797px;top:618px;width:1px;height:24px;background:#a6a6a6"></div>
<div class="l" style="left:876px;top:618px;width:1px;height:24px;background:#a6a6a6"></div>
<div class="t" style="right:778.9px;top:625.22px;font-size:12.4px;font-family:'Liberation Serif', serif;font-weight:700;color:#222;font-style:normal;letter-spacing:0.15px;">Всього:</div>
<div class="t" style="right:670.6px;top:623.73px;font-size:13.2px;font-family:'Liberation Sans', sans-serif;font-weight:700;color:#222;font-style:normal;letter-spacing:-0.2px;">948,81</div>
<div class="t" style="right:586.6px;top:623.73px;font-size:13.2px;font-family:'Liberation Sans', sans-serif;font-weight:700;color:#222;font-style:normal;letter-spacing:-0.2px;">32,87</div>
<div class="t" style="right:507.6px;top:623.73px;font-size:13.2px;font-family:'Liberation Sans', sans-serif;font-weight:700;color:#222;font-style:normal;letter-spacing:-0.2px;">118,32</div>
<div class="t" style="right:402.9px;top:623.73px;font-size:13.2px;font-family:'Liberation Sans', sans-serif;font-weight:700;color:#222;font-style:normal;letter-spacing:-0.2px;">1 100,00</div>
<div class="l" style="left:62px;top:664px;width:920px;height:1px;background:#a6a6a6"></div>
<div class="l" style="left:62px;top:641px;width:1px;height:24px;background:#a6a6a6"></div>
<div class="l" style="left:981px;top:641px;width:1px;height:24px;background:#a6a6a6"></div>
<div class="t" style="left:66.3px;top:644.60px;font-size:17.2px;font-family:'Liberation Serif', serif;font-weight:700;color:#222;font-style:normal;">Яким Іван Олександрович</div>
<div class="l" style="left:62px;top:687px;width:920px;height:1px;background:#a6a6a6"></div>
<div class="l" style="left:62px;top:664px;width:1px;height:24px;background:#a6a6a6"></div>
<div class="l" style="left:981px;top:664px;width:1px;height:24px;background:#a6a6a6"></div>
<div class="l" style="left:162px;top:664px;width:1px;height:24px;background:#a6a6a6"></div>
<div class="l" style="left:240px;top:664px;width:1px;height:24px;background:#a6a6a6"></div>
<div class="l" style="left:503px;top:664px;width:1px;height:24px;background:#a6a6a6"></div>
<div class="l" style="left:608px;top:664px;width:1px;height:24px;background:#a6a6a6"></div>
<div class="l" style="left:713px;top:664px;width:1px;height:24px;background:#a6a6a6"></div>
<div class="l" style="left:797px;top:664px;width:1px;height:24px;background:#a6a6a6"></div>
<div class="l" style="left:876px;top:664px;width:1px;height:24px;background:#a6a6a6"></div>
<div class="t" style="right:1228.4px;top:669.63px;font-size:13.2px;font-family:'Liberation Sans', sans-serif;font-weight:400;color:#222;font-style:normal;letter-spacing:-0.35px;">10.03.2026</div>
<div class="t" style="left:166px;top:670.10px;font-size:12.4px;font-family:'Liberation Sans', sans-serif;font-weight:400;color:#222;font-style:normal;">3</div>
<div class="t" style="left:244.5px;top:670.10px;font-size:12.4px;font-family:'Liberation Sans', sans-serif;font-weight:400;color:#222;font-style:normal;">Т</div>
<div class="t" style="right:670.6px;top:669.73px;font-size:13.2px;font-family:'Liberation Sans', sans-serif;font-weight:400;color:#222;font-style:normal;letter-spacing:-0.2px;">244,86</div>
<div class="t" style="right:586.6px;top:669.73px;font-size:13.2px;font-family:'Liberation Sans', sans-serif;font-weight:400;color:#222;font-style:normal;letter-spacing:-0.2px;">5,14</div>
<div class="t" style="right:402.9px;top:669.73px;font-size:13.2px;font-family:'Liberation Sans', sans-serif;font-weight:700;color:#222;font-style:normal;letter-spacing:-0.2px;">250,00</div>
<div class="l" style="left:62px;top:710px;width:920px;height:1px;background:#a6a6a6"></div>
<div class="l" style="left:62px;top:687px;width:1px;height:24px;background:#a6a6a6"></div>
<div class="l" style="left:981px;top:687px;width:1px;height:24px;background:#a6a6a6"></div>
<div class="l" style="left:608px;top:687px;width:1px;height:24px;background:#a6a6a6"></div>
<div class="l" style="left:713px;top:687px;width:1px;height:24px;background:#a6a6a6"></div>
<div class="l" style="left:797px;top:687px;width:1px;height:24px;background:#a6a6a6"></div>
<div class="l" style="left:876px;top:687px;width:1px;height:24px;background:#a6a6a6"></div>
<div class="t" style="right:778.9px;top:694.22px;font-size:12.4px;font-family:'Liberation Serif', serif;font-weight:700;color:#222;font-style:normal;letter-spacing:0.15px;">Всього:</div>
<div class="t" style="right:670.6px;top:692.73px;font-size:13.2px;font-family:'Liberation Sans', sans-serif;font-weight:700;color:#222;font-style:normal;letter-spacing:-0.2px;">244,86</div>
<div class="t" style="right:586.6px;top:692.73px;font-size:13.2px;font-family:'Liberation Sans', sans-serif;font-weight:700;color:#222;font-style:normal;letter-spacing:-0.2px;">5,14</div>
<div class="t" style="right:402.9px;top:692.73px;font-size:13.2px;font-family:'Liberation Sans', sans-serif;font-weight:700;color:#222;font-style:normal;letter-spacing:-0.2px;">250,00</div>
<div class="l" style="left:62px;top:718px;width:920px;height:1px;background:#a6a6a6"></div>
<div class="l" style="left:62px;top:710px;width:1px;height:9px;background:#a6a6a6"></div>
<div class="l" style="left:981px;top:710px;width:1px;height:9px;background:#a6a6a6"></div>
<div class="l" style="left:62px;top:741px;width:920px;height:1px;background:#a6a6a6"></div>
<div class="l" style="left:62px;top:718px;width:1px;height:24px;background:#a6a6a6"></div>
<div class="l" style="left:608px;top:718px;width:1px;height:24px;background:#a6a6a6"></div>
<div class="l" style="left:713px;top:718px;width:1px;height:24px;background:#a6a6a6"></div>
<div class="l" style="left:797px;top:718px;width:1px;height:24px;background:#a6a6a6"></div>
<div class="l" style="left:876px;top:718px;width:1px;height:24px;background:#a6a6a6"></div>
<div class="l" style="left:981px;top:718px;width:1px;height:24px;background:#a6a6a6"></div>
<div class="t" style="right:780.2px;top:722.84px;font-size:15.0px;font-family:'Liberation Serif', serif;font-weight:700;color:#222;font-style:normal;letter-spacing:0.2px;">Разом по таблиці:</div>
<div class="t" style="right:670.6px;top:723.73px;font-size:13.2px;font-family:'Liberation Sans', sans-serif;font-weight:700;color:#222;font-style:normal;letter-spacing:-0.2px;">64 169,12</div>
<div class="t" style="right:586.6px;top:723.73px;font-size:13.2px;font-family:'Liberation Sans', sans-serif;font-weight:700;color:#222;font-style:normal;letter-spacing:-0.2px;">6 010,44</div>
<div class="t" style="right:507.6px;top:723.73px;font-size:13.2px;font-family:'Liberation Sans', sans-serif;font-weight:700;color:#222;font-style:normal;letter-spacing:-0.2px;">2 351,04</div>
<div class="t" style="right:402.9px;top:723.73px;font-size:13.2px;font-family:'Liberation Sans', sans-serif;font-weight:700;color:#222;font-style:normal;letter-spacing:-0.2px;">72 530,60</div>
<div class="l" style="left:172px;top:416px;width:20px;height:37px;background:#f0f0f0;overflow:hidden;"><div style="position:absolute;left:-4px;top:1px;width:16px;height:15px;background:#cdcdcf;filter:blur(2px);"></div><div style="position:absolute;left:6px;top:1px;width:18px;height:15px;background:#e6e6e7;filter:blur(2px);"></div><div style="position:absolute;left:-4px;top:20px;width:22px;height:20px;background:#ececec;filter:blur(2px);"></div></div>
<div class="l" style="left:250px;top:414px;width:70px;height:41px;background:#eeeeee;overflow:hidden;"><div style="position:absolute;left:-4px;top:4px;width:54px;height:14px;background:#cdcdcf;filter:blur(2px);"></div><div style="position:absolute;left:46px;top:4px;width:28px;height:14px;background:#dcdcdd;filter:blur(2px);"></div><div style="position:absolute;left:0px;top:23px;width:40px;height:15px;background:#dcdcdd;filter:blur(2px);"></div><div style="position:absolute;left:40px;top:23px;width:34px;height:15px;background:#e6e6e7;filter:blur(2px);"></div></div>
<div class="l" style="left:170px;top:506px;width:19px;height:42px;background:#efefef;overflow:hidden;"><div style="position:absolute;left:-4px;top:4px;width:26px;height:16px;background:#cdcdcf;filter:blur(2px);"></div><div style="position:absolute;left:-4px;top:24px;width:26px;height:15px;background:#dcdcdd;filter:blur(2px);"></div></div>
<div class="l" style="left:252px;top:508px;width:110px;height:36px;background:#ededed;overflow:hidden;"><div style="position:absolute;left:-4px;top:3px;width:107px;height:14px;background:#cdcdcf;filter:blur(2px);"></div><div style="position:absolute;left:88px;top:3px;width:26px;height:14px;background:#dcdcdd;filter:blur(2px);"></div><div style="position:absolute;left:-4px;top:22px;width:77px;height:13px;background:#cdcdcf;filter:blur(2px);"></div><div style="position:absolute;left:73px;top:20px;width:41px;height:18px;background:#f7f7f7;filter:blur(2px);"></div></div>
<div class="l" style="left:172px;top:598px;width:27px;height:14px;background:#e2e2e2;overflow:hidden;"><div style="position:absolute;left:-4px;top:2px;width:35px;height:10px;background:#dcdcdd;filter:blur(2px);"></div></div>
<div class="l" style="left:252px;top:598px;width:112px;height:16px;background:#e6e6e6;overflow:hidden;"><div style="position:absolute;left:-4px;top:2px;width:82px;height:12px;background:#cdcdcf;filter:blur(2px);"></div><div style="position:absolute;left:78px;top:2px;width:38px;height:12px;background:#e6e6e7;filter:blur(2px);"></div></div>
<div class="l" style="left:172px;top:666px;width:25px;height:19px;background:#e6e6e6;overflow:hidden;"><div style="position:absolute;left:-4px;top:2px;width:32px;height:15px;background:#dcdcdd;filter:blur(2px);"></div></div>
<div class="l" style="left:248px;top:670px;width:86px;height:16px;background:#ececec;overflow:hidden;"><div style="position:absolute;left:-4px;top:2px;width:56px;height:12px;background:#dcdcdd;filter:blur(2px);"></div><div style="position:absolute;left:52px;top:2px;width:20px;height:12px;background:#cdcdcf;filter:blur(2px);"></div><div style="position:absolute;left:72px;top:2px;width:18px;height:12px;background:#f4f4f4;filter:blur(2px);"></div></div>
<div class="l" style="left:109px;top:804px;width:342px;height:1px;background:#a0a0a0"></div>
<div class="l" style="left:477px;top:804px;width:184px;height:1px;background:#a0a0a0"></div>
<div class="l" style="left:687px;top:804px;width:243px;height:1px;background:#a0a0a0"></div>
<div class="t" style="left:-20px;width:600px;text-align:center;top:786.30px;font-size:16.0px;font-family:'Liberation Serif', serif;font-weight:400;color:#222;font-style:normal;">Заступник начальника</div>
<div class="t" style="left:-20.69999999999999px;width:600px;text-align:center;top:807.38px;font-size:13.4px;font-family:'Liberation Serif', serif;font-weight:400;color:#444;font-style:italic;">(посада)</div>
<div class="t" style="left:267.79999999999995px;width:600px;text-align:center;top:807.28px;font-size:13.4px;font-family:'Liberation Serif', serif;font-weight:400;color:#444;font-style:italic;">М.П. (підпис)</div>
<div class="t" style="left:507.79999999999995px;width:600px;text-align:center;top:785.20px;font-size:16.0px;font-family:'Liberation Serif', serif;font-weight:400;color:#222;font-style:normal;">Білоус О.І.</div>
<div class="t" style="left:504.6px;width:600px;text-align:center;top:807.28px;font-size:13.4px;font-family:'Liberation Serif', serif;font-weight:400;color:#444;font-style:italic;">(прізвище та ініціали)</div>
</body></html>
